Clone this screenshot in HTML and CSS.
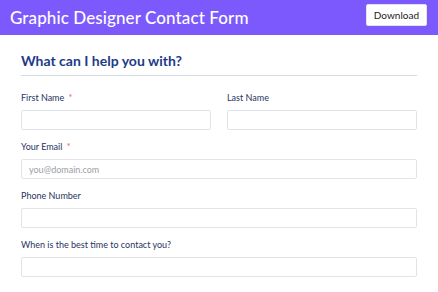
FILE: index.html
```html
<!DOCTYPE html>
<html>
<head>
<meta charset="utf-8">
<link rel="stylesheet" href="styles.css">
</head>
<body>
<header class="topbar">
  <h1 class="title">Graphic Designer Contact Form</h1>
  <button class="download">Download</button>
</header>
<main class="form">
  <h2 class="section">What can I help you with?</h2>
  <div class="row two">
    <div class="field">
      <label class="label">First Name <span class="req">*</span></label>
      <div class="input"></div>
    </div>
    <div class="field">
      <label class="label">Last Name</label>
      <div class="input"></div>
    </div>
  </div>
  <div class="field">
    <label class="label">Your Email <span class="req">*</span></label>
    <div class="input"><span class="ph">you@domain.com</span></div>
  </div>
  <div class="field">
    <label class="label">Phone Number</label>
    <div class="input"></div>
  </div>
  <div class="field">
    <label class="label">When is the best time to contact you?</label>
    <div class="input"></div>
  </div>
</main>
</body>
</html>
```
FILE: styles.css
```css
* { box-sizing: border-box; }
html, body { margin: 0; padding: 0; background: #fff; overflow: hidden; }
body { font-family: "Lato", "Noto Sans", sans-serif; width: 438px; height: 292px; }
.topbar {
  height: 35px;
  background: #7b59fd;
  display: flex;
  align-items: center;
  justify-content: space-between;
  padding: 0 11px 0 10px;
}
.title {
  margin: 0;
  color: #fff;
  font-size: 17px;
  font-weight: 500;
  letter-spacing: 0.1px;
}
.download {
  height: 22px;
  margin-top: -6px;
  padding: 0 7px;
  background: #fff;
  border: 1px solid #e3e3e3;
  border-radius: 2px;
  font-family: "Lato", sans-serif;
  font-size: 10px;
  color: #222;
}
.form { padding: 17px 21px 0 21px; width: 438px; }
.section {
  margin: 0;
  font-size: 14px;
  line-height: 18px;
  font-weight: 700;
  color: #1e3a8a;
  padding-bottom: 5px;
  border-bottom: 1px solid #d4dce6;
  margin-bottom: 15px;
  width: 396px;
}
.row.two { display: flex; gap: 16px; width: 396px; }
.row.two .field { flex: 1; width: auto; }
.field { margin-bottom: 10px; width: 396px; }
.label {
  display: block;
  font-size: 9px;
  line-height: 14px;
  color: #1f3561;
  margin-bottom: 5px;
}
.req { color: #ef5a5a; margin-left: 2px; }
.input {
  height: 20px;
  border: 1px solid #dfe4ea;
  border-radius: 2px;
  display: flex;
  align-items: center;
  padding-left: 7px;
}
.ph { font-size: 9px; color: #9a9ea6; }
```
